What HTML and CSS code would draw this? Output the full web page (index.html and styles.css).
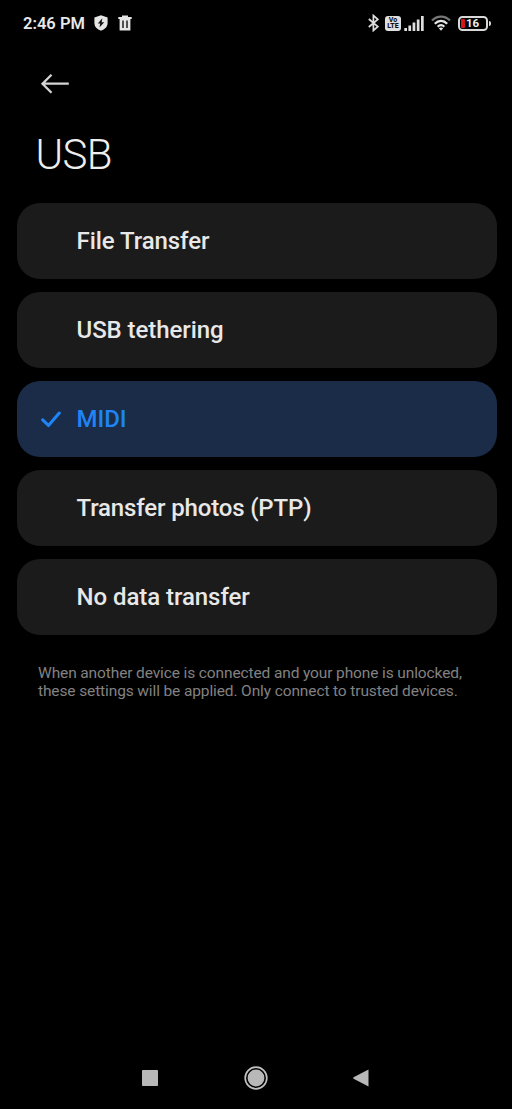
FILE: index.html
```html
<!DOCTYPE html>
<html lang="en">
<head>
<meta charset="utf-8">
<title>USB</title>
<link rel="stylesheet" href="styles.css">
</head>
<body>
<div class="screen">
  <div class="status-bar">
    <div class="status-left">
      <span class="clock">2:46 PM</span>
      <svg class="shield" width="14" height="16" viewBox="0 0 14 16"><path d="M7 .3 13.600 2.600V8c0 3.700-2.600 6.300-6.600 7.700C3 14.300.4 11.700.4 8V2.600z" fill="#e6e6e6"/><path d="M8.300 3.300 3.800 8.600h2.400l-.7 4 4.700-5.400H7.700z" fill="#111"/></svg>
      <svg class="trash" width="14" height="16" viewBox="0 0 14 16"><path d="M.3 2H4V.5h6V2h3.700v2H.3zM1.600 4h10.800v11.500H1.600z" fill="#e6e6e6"/><path d="M5 5.500v7.500M9 5.500v7.500" stroke="#111" stroke-width="1.400"/></svg>
    </div>
    <div class="status-right">
      <svg class="bluetooth" width="11" height="18" viewBox="0 0 11 18"><path d="M.8 5 9.800 12.700 5.400 16.500V1.500L9.800 5.300.8 13" fill="none" stroke="#dedede" stroke-width="1.700"/></svg>
      <span class="volte"><span>Vo</span><span>LTE</span></span>
      <svg class="signal" width="20" height="15" viewBox="0 0 20 15"><path d="M.3 12h2.700v3H.3zM4.400 9.500h2.700V15H4.400zM8.600 6.500h2.700V15H8.600zM12.800 3.500h2.700V15h-2.700zM17 0h2.700v15H17z" fill="#dedede"/></svg>
      <svg class="wifi" width="20" height="16" viewBox="0 0 20 16"><g fill="none" stroke-width="2.200"><path d="M1 5.600C6 .3 14 .3 19 5.600" stroke="#777"/><path d="M3.800 8.700c3.600-3.800 8.800-3.800 12.400 0M6.700 11.700c2-2 4.600-2 6.600 0" stroke="#e6e6e6"/></g><path d="M7.800 13.300q2.200-1.800 4.400 0L10 15.700z" fill="#e6e6e6"/></svg>
      <span class="battery"><span class="battery-level"></span><span class="battery-value">16</span></span>
      <span class="battery-tip"></span>
    </div>
  </div>
  <div class="toolbar">
    <svg width="30" height="22" viewBox="0 0 30 22"><path d="M28.800 10.700H2.300M11.500 1.700l-9 9 9 9" fill="none" stroke="#d4d4d4" stroke-width="2.300"/></svg>
  </div>
  <h1 class="title">USB</h1>
  <div class="options">
    <div class="option"><span>File Transfer</span></div>
    <div class="option"><span>USB tethering</span></div>
    <div class="option selected"><svg class="check" width="20" height="17" viewBox="0 0 20 17"><path d="m1.700 8.800 5.800 5.700L18.300 2.100" fill="none" stroke="#1f84f5" stroke-width="3.100" stroke-linecap="round" stroke-linejoin="round"/></svg><span>MIDI</span></div>
    <div class="option"><span class="snug">Transfer photos (PTP)</span></div>
    <div class="option"><span>No data transfer</span></div>
  </div>
  <p class="note">When another device is connected and your phone is unlocked,<br>these settings will be applied. Only connect to trusted devices.</p>
  <div class="nav-bar">
    <svg width="16" height="16" viewBox="0 0 16 16"><rect width="16" height="16" rx=".8" fill="#b8b8b8"/></svg>
    <svg width="24" height="24" viewBox="0 0 24 24"><circle cx="12" cy="12" r="10.800" fill="none" stroke="#c0c0c0" stroke-width="1.700"/><circle cx="12" cy="12" r="8.400" fill="#b8b8b8"/></svg>
    <svg width="16" height="18" viewBox="0 0 16 18"><path d="M15.500 .6v16.800L.6 9.700Q-.2 9 .6 8.300z" fill="#b8b8b8"/></svg>
  </div>
</div>
</body>
</html>
```
FILE: styles.css
```css
* { box-sizing: border-box; }
body { margin: 0; background: #000; font-family: Roboto, sans-serif; }
svg { display: block; flex: none; }
.screen { display: flex; flex-direction: column; width: 512px; height: 1109px; overflow: hidden; background: #000; }
.status-bar { display: flex; justify-content: space-between; height: 46px; padding: 0 21px 0 23px; }
.status-left, .status-right { display: flex; align-items: center; }
.clock { padding-top: 1px; color: #e8e8e8; font-size: 16.500px; font-weight: 600; line-height: 20px; width: 71px; white-space: nowrap; }
.trash { margin-left: 10px; }
.volte { display: flex; flex-direction: column; align-items: center; justify-content: center; width: 16px; height: 15px; margin-left: 6px; border-radius: 3px; background: #dedede; color: #111; font-size: 7px; font-weight: 800; line-height: 6.500px; }
.signal { margin-left: 3px; }
.wifi { margin-left: 7px; }
.battery { position: relative; width: 30px; height: 15px; margin-left: 7px; border: 2px solid #d8d8d8; border-radius: 4.500px; }
.battery-level { position: absolute; left: 1px; top: 1px; width: 4px; height: 9px; border-radius: 1px; background: #d81616; }
.battery-value { position: absolute; left: 6px; top: 0; color: #eee; font-size: 11.500px; font-weight: 700; line-height: 11px; }
.battery-tip { width: 2px; height: 5px; margin-left: 1px; border-radius: 0 2px 2px 0; background: #d8d8d8; }
.toolbar { height: 76px; padding: 27px 0 0 40px; }
.title { height: 80.500px; margin: 0; padding: 9px 0 0 35.500px; color: #eee; font-size: 42px; font-weight: 300; line-height: 48px; letter-spacing: -.6px; }
.options { display: flex; flex-direction: column; gap: 13px; padding: 0 15.500px 0 16.500px; }
.option { display: flex; align-items: center; height: 76px; padding: 1px 0 0 60px; border-radius: 23px; background: #1b1b1b; color: #e8e8e8; font-size: 24px; font-weight: 500; line-height: 28px; letter-spacing: -.06px; }
.option.selected { padding-left: 24.500px; background: #1b2c48; color: #1f84f5; }
.snug { letter-spacing: -.15px; }
.check { margin-right: 15.500px; }
.note { margin: 29.500px 0 0 38px; color: #828282; font-size: 15.500px; line-height: 18px; letter-spacing: -.12px; white-space: nowrap; }
.nav-bar { display: flex; align-items: center; justify-content: space-between; height: 62px; margin-top: auto; padding: 0 143px 0 142px; }
```
